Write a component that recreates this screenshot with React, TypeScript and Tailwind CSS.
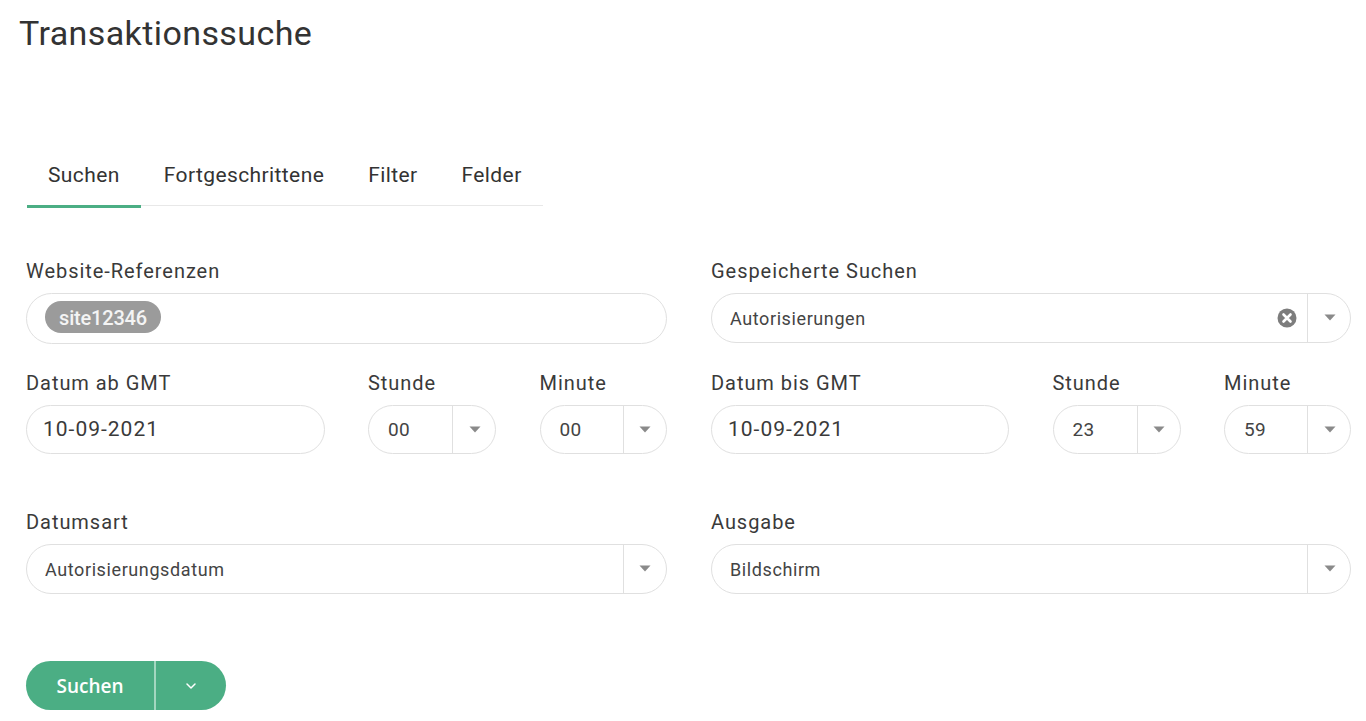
import { ChevronDown } from "lucide-react";

const label = "block h-[22px] text-[20px] leading-[22px] text-[#3a3a3a] tracking-[0.95px]";

function Caret() {
  return (
    <svg width="12" height="7" viewBox="0 0 12 7" className="block">
      <path d="M0.5 0.5h11L6 6.5z" fill="#8a8a8a" />
    </svg>
  );
}

function Select({ value, clear, small }: { value: string; clear?: boolean; small?: boolean }) {
  return (
    <div className={`flex items-stretch rounded-full border border-[#e0e0e0] bg-white ${small ? "h-[49px]" : "h-[50px]"}`}>
      <div
        className={`flex min-w-0 flex-1 items-center text-[#444] ${
          small ? "pl-[19px] pt-[2px] text-[19px] tracking-[0.3px]" : "pl-[18px] pt-[1px] text-[18px] tracking-[0.6px]"
        }`}
      >
        <span className="flex-1 truncate">{value}</span>
        {clear && (
          <svg width="20" height="20" viewBox="0 0 20 20" className="mr-[10px] -mt-[1px]">
            <circle cx="10" cy="10" r="9.5" fill="#7d7d7d" />
            <path d="M6.5 6.5l7 7M13.5 6.5l-7 7" stroke="#fff" strokeWidth="2.6" strokeLinecap="round" />
          </svg>
        )}
      </div>
      <div className={`flex w-[43px] items-center justify-center border-l border-[#e0e0e0] pl-[1px] ${small ? "" : "pb-[2px]"}`}>
        <Caret />
      </div>
    </div>
  );
}

function DateRow({ dateLabel, date, hour, minute }: { dateLabel: string; date: string; hour: string; minute: string }) {
  return (
    <div className="grid grid-cols-[1fr_128px_127px] gap-x-[43.5px]">
      <div>
        <label className={label}>{dateLabel}</label>
        <div className="mt-[11px] flex h-[49px] items-center rounded-full border border-[#e0e0e0] pl-[16px] text-[21px] tracking-[1px] text-[#3a3a3a]">
          {date}
        </div>
      </div>
      <div>
        <label className={label}>Stunde</label>
        <div className="mt-[11px]">
          <Select value={hour} small />
        </div>
      </div>
      <div>
        <label className={label}>Minute</label>
        <div className="mt-[11px]">
          <Select value={minute} small />
        </div>
      </div>
    </div>
  );
}

export default function App() {
  return (
    <div className="h-[721px] overflow-hidden bg-white pl-[26px] pr-[15px] font-['Roboto',sans-serif]">
      <h1 className="-ml-[7px] pt-[13px] text-[34px] leading-[40px] tracking-[0.4px] text-[#333]">Transaktionssuche</h1>

      <div className="ml-[1px] mt-[110px] flex h-[43px] w-[516px] border-b border-[#e8e8e8] text-[21px] leading-[24px] tracking-[0.4px] text-[#333]">
        <div className="h-[45px] border-b-[3px] border-[#4bae84] px-[21px]">Suchen</div>
        <div className="pl-[23px] pr-[22px]">Fortgeschrittene</div>
        <div className="px-[22px]">Filter</div>
        <div className="px-[22px]">Felder</div>
      </div>

      <div className="mt-[54px] grid grid-cols-[640.5px_640px] gap-x-[44.5px]">
        <div>
          <label className={label}>Website-Referenzen</label>
          <div className="mt-[11px] flex h-[51px] items-center rounded-full border border-[#e0e0e0] pl-[18px]">
            <span className="mb-[3px] flex h-[32px] w-[116px] items-center justify-center rounded-full bg-[#9b9b9b] pt-[1px] text-[20px] font-medium -tracking-[0.2px] text-[#f4f4f4]">
              site12346
            </span>
          </div>
        </div>
        <div>
          <label className={label}>Gespeicherte Suchen</label>
          <div className="mt-[11px]">
            <Select value="Autorisierungen" clear />
          </div>
        </div>

        <div className="mt-[28px]">
          <DateRow dateLabel="Datum ab GMT" date="10-09-2021" hour="00" minute="00" />
        </div>
        <div className="mt-[28px]">
          <DateRow dateLabel="Datum bis GMT" date="10-09-2021" hour="23" minute="59" />
        </div>

        <div className="mt-[57px]">
          <label className={label}>Datumsart</label>
          <div className="mt-[11px]">
            <Select value="Autorisierungsdatum" />
          </div>
        </div>
        <div className="mt-[57px]">
          <label className={label}>Ausgabe</label>
          <div className="mt-[11px]">
            <Select value="Bildschirm" />
          </div>
        </div>
      </div>

      <div className="mt-[67px] flex h-[49px] w-[200px] items-stretch rounded-full bg-[#4bae84] text-white">
        <button className="w-[128px] pt-[2px] font-['Open_Sans',sans-serif] text-[19px] font-semibold">Suchen</button>
        <div className="w-[2px] bg-[#a3d7c0]" />
        <button className="flex flex-1 items-center justify-center">
          <ChevronDown size={16} strokeWidth={2.25} />
        </button>
      </div>
    </div>
  );
}
